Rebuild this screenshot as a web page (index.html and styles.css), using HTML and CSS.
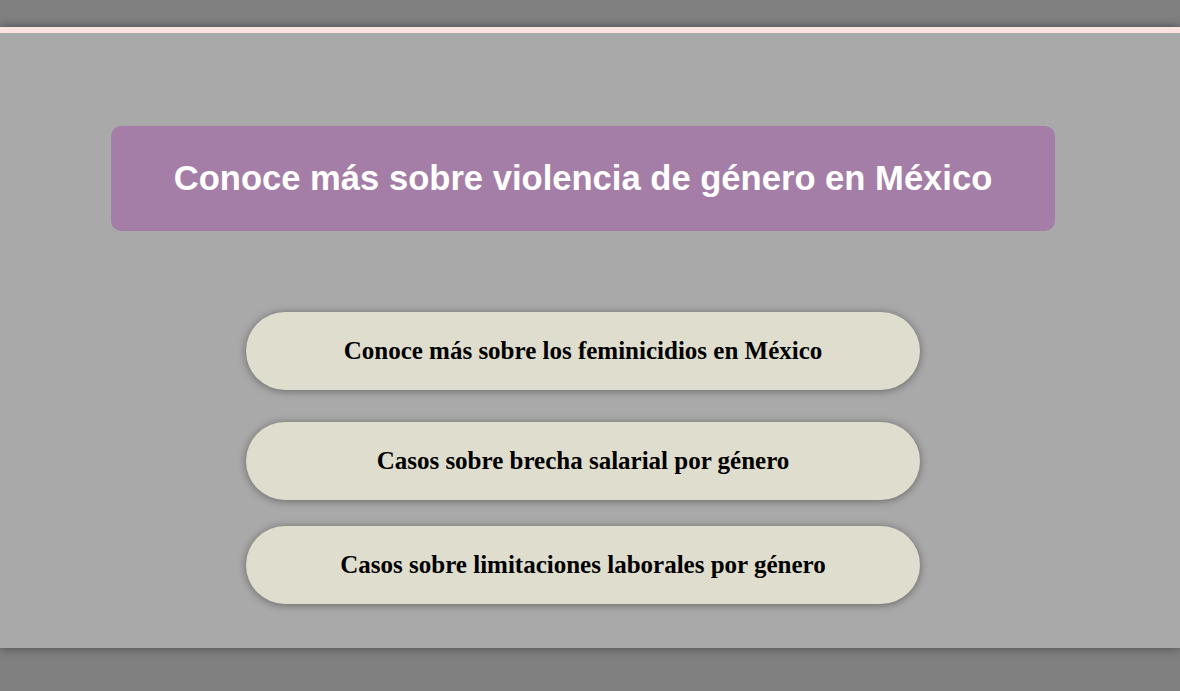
FILE: index.html
```html
<!DOCTYPE html>
<html lang="es">
<head>
<meta charset="utf-8">
<title>Violencia de género en México</title>
<link rel="stylesheet" href="styles.css">
</head>
<body>
<div class="top"></div>
<section class="panel">
  <div class="inner">
    <h1 class="title">Conoce más sobre violencia de género en México</h1>
    <div class="links">
      <a class="btn btn-1" href="#">Conoce más sobre los feminicidios en México</a>
      <a class="btn btn-2" href="#">Casos sobre brecha salarial por género</a>
      <a class="btn btn-3" href="#">Casos sobre limitaciones laborales por género</a>
    </div>
  </div>
</section>
</body>
</html>
```
FILE: styles.css
```css
html, body {
  margin: 0;
  padding: 0;
  background: #808080;
  height: 100%;
  overflow: hidden;
}
.top {
  height: 27px;
}
.panel {
  border-top: 6px solid #fde2e2;
  background: #a9a9a9;
  height: 615px;
  box-shadow: 0 0 10px rgba(0, 0, 0, 0.45);
  position: relative;
}
.inner {
  width: 1166px;
  padding-top: 93px;
  display: flex;
  flex-direction: column;
  align-items: center;
}
.title {
  box-sizing: border-box;
  width: 944px;
  height: 105px;
  margin: 0;
  background: #a47ea6;
  border-radius: 10px;
  color: #fff;
  font-family: "Liberation Sans", Arial, sans-serif;
  font-weight: bold;
  font-size: 34.6px;
  display: flex;
  align-items: center;
  justify-content: center;
}
.links {
  margin-top: 81px;
  display: flex;
  flex-direction: column;
  align-items: center;
}
.btn {
  width: 674px;
  height: 78px;
  box-sizing: border-box;
  background: #dfddcd;
  border-radius: 39px;
  box-shadow: 0 1px 9px rgba(0, 0, 0, 0.4);
  color: #000;
  text-decoration: none;
  font-family: "Liberation Serif", "Times New Roman", serif;
  font-weight: bold;
  font-size: 25px;
  display: flex;
  align-items: center;
  justify-content: center;
}
.btn-2 { margin-top: 32px; }
.btn-3 { margin-top: 26px; }
```
